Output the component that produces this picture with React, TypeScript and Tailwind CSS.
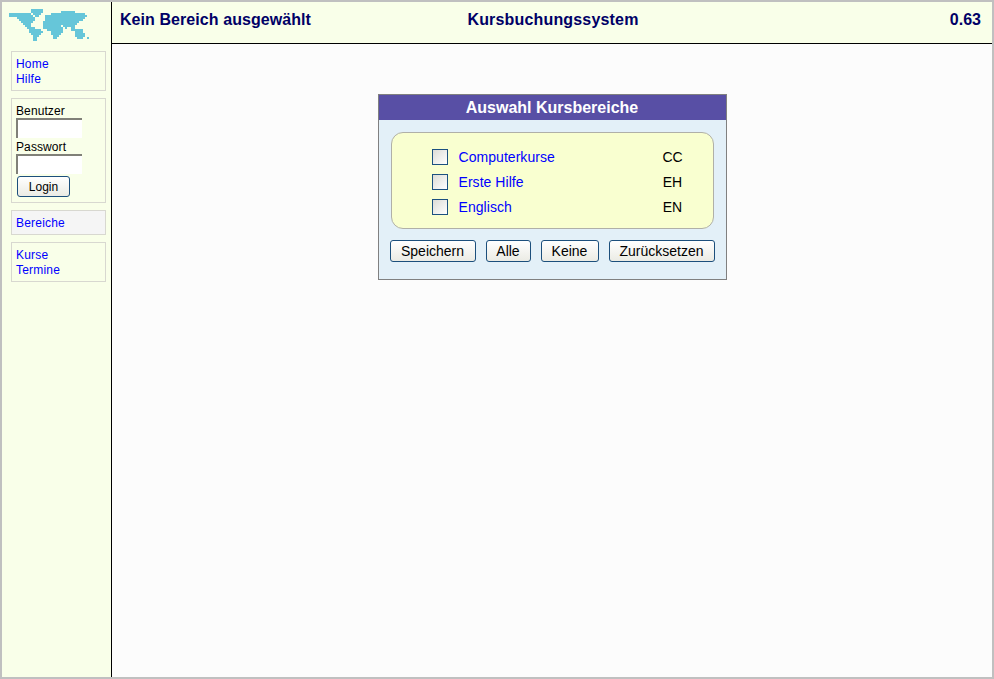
const font = "[font-family:'Liberation_Sans',Arial,sans-serif]";

const mapRows: [number, number][][] = [
  [[11, 16]],
  [[11, 16], [26, 32]],
  [[0, 10], [12, 15], [21, 37]],
  [[0, 11], [13, 14], [18, 38]],
  [[4, 12], [18, 37]],
  [[5, 12], [18, 36]],
  [[6, 11], [17, 34]],
  [[7, 10], [17, 33]],
  [[8, 10], [17, 25], [27, 29], [30, 32]],
  [[9, 12], [17, 26], [28, 28], [31, 32]],
  [[10, 15], [19, 26], [31, 36]],
  [[10, 16], [21, 26], [33, 36]],
  [[11, 15], [21, 25], [33, 37]],
  [[12, 14], [22, 24], [33, 37]],
  [[12, 13], [22, 23], [34, 36], [39, 39]],
  [[12, 13]],
];

function WorldMap() {
  return (
    <svg width="80" height="32" viewBox="0 0 80 32" className="block" fill="#66c6d9" shapeRendering="crispEdges">
      {mapRows.flatMap((runs, y) =>
        runs.map(([a, b], i) => (
          <rect key={`${y}-${i}`} x={a * 2} y={y * 2} width={(b - a + 1) * 2} height={2} />
        )),
      )}
    </svg>
  );
}

function Panel({ children, className = "" }: { children: React.ReactNode; className?: string }) {
  return <div className={`ml-[9px] w-[95px] border border-[#d8d8d0] px-1 ${className}`}>{children}</div>;
}

function NavLink({ children }: { children: React.ReactNode }) {
  return <div className="h-[15px] text-[12px] leading-[15px] tracking-[0.2px] text-[#0000ff]">{children}</div>;
}

function Btn({ children, className = "" }: { children: React.ReactNode; className?: string }) {
  return (
    <button
      className={`rounded-[3px] border border-[#1c4f7c] bg-gradient-to-b from-white to-[#ebebe4] text-black ${className}`}
    >
      {children}
    </button>
  );
}

function Row({ name, code }: { name: string; code: string }) {
  return (
    <div className="flex h-[25px] items-center">
      <div className="ml-10 h-4 w-4 border border-[#1c5180] bg-gradient-to-br from-[#dcdcd7] to-white" />
      <div className="ml-[11px] w-[204px] pt-px text-[14px] tracking-[0.05px] text-[#0000ff]">{name}</div>
      <div className="w-[20px] pt-px text-center text-[14px] text-black">{code}</div>
    </div>
  );
}

const actionBtn = "h-[22px] text-[14px] leading-[20px]";

export default function App() {
  return (
    <div className={`flex h-[679px] w-[994px] overflow-hidden border-2 border-[#c0c0c0] bg-[#fcfcfc] ${font}`}>
      <aside className="flex w-[110px] shrink-0 flex-col border-r border-black bg-[#f9ffe9]">
        <div className="mt-[7px] ml-[7px] h-[42px]">
          <WorldMap />
        </div>
        <Panel className="h-[40px] pt-[5px]">
          <NavLink>Home</NavLink>
          <NavLink>Hilfe</NavLink>
        </Panel>
        <Panel className="mt-[7px] h-[105px] pt-[5px]">
          <div className="h-[14px] text-[12px] leading-[15px] tracking-[0.1px] text-black">Benutzer</div>
          <div className="h-[20px] w-[66px] border-t-2 border-l-2 border-[#808078] bg-white" />
          <div className="mt-[2px] h-[14px] text-[12px] leading-[15px] tracking-[0.1px] text-black">Passwort</div>
          <div className="h-[20px] w-[66px] border-t-2 border-l-2 border-[#808078] bg-white" />
          <Btn className="mt-[2px] ml-px block h-[21px] w-[53px] pt-px text-[12px] leading-[19px]">Login</Btn>
        </Panel>
        <Panel className="mt-[7px] h-[25px] bg-[#f5f5f5] pt-[5px]">
          <NavLink>Bereiche</NavLink>
        </Panel>
        <Panel className="mt-[7px] h-[40px] pt-[5px]">
          <NavLink>Kurse</NavLink>
          <NavLink>Termine</NavLink>
        </Panel>
      </aside>
      <main className="flex min-w-0 flex-1 flex-col">
        <header className="flex h-[42px] shrink-0 items-center justify-between border-b border-black bg-[#f9ffe9] pr-[11px] pb-[5px] pl-2 text-[16px] font-bold text-[#000066]">
          <span className="w-[348px] tracking-[0.07px]">Kein Bereich ausgewählt</span>
          <span className="tracking-[0.17px]">Kursbuchungssystem</span>
          <span className="w-[343px] text-right">0.63</span>
        </header>
        <div className="flex flex-1 justify-center pt-[50px]">
          <section className="h-[186px] w-[349px] border border-[#808080] bg-[#e3f0f8]">
            <h1 className="h-[25px] bg-[#584fa5] text-center text-[16px] leading-[26px] font-bold text-white">
              Auswahl Kursbereiche
            </h1>
            <div className="mx-3 mt-[12px] h-[97px] rounded-[12px] border border-[#b0b0a8] bg-[#f9ffd0] pt-[11px]">
              <Row name="Computerkurse" code="CC" />
              <Row name="Erste Hilfe" code="EH" />
              <Row name="Englisch" code="EN" />
            </div>
            <div className="mt-[11px] ml-[11px] flex gap-[10px]">
              <Btn className={`w-[86px] ${actionBtn}`}>Speichern</Btn>
              <Btn className={`w-[45px] ${actionBtn}`}>Alle</Btn>
              <Btn className={`w-[58px] ${actionBtn}`}>Keine</Btn>
              <Btn className={`w-[106px] ${actionBtn}`}>Zurücksetzen</Btn>
            </div>
          </section>
        </div>
      </main>
    </div>
  );
}
